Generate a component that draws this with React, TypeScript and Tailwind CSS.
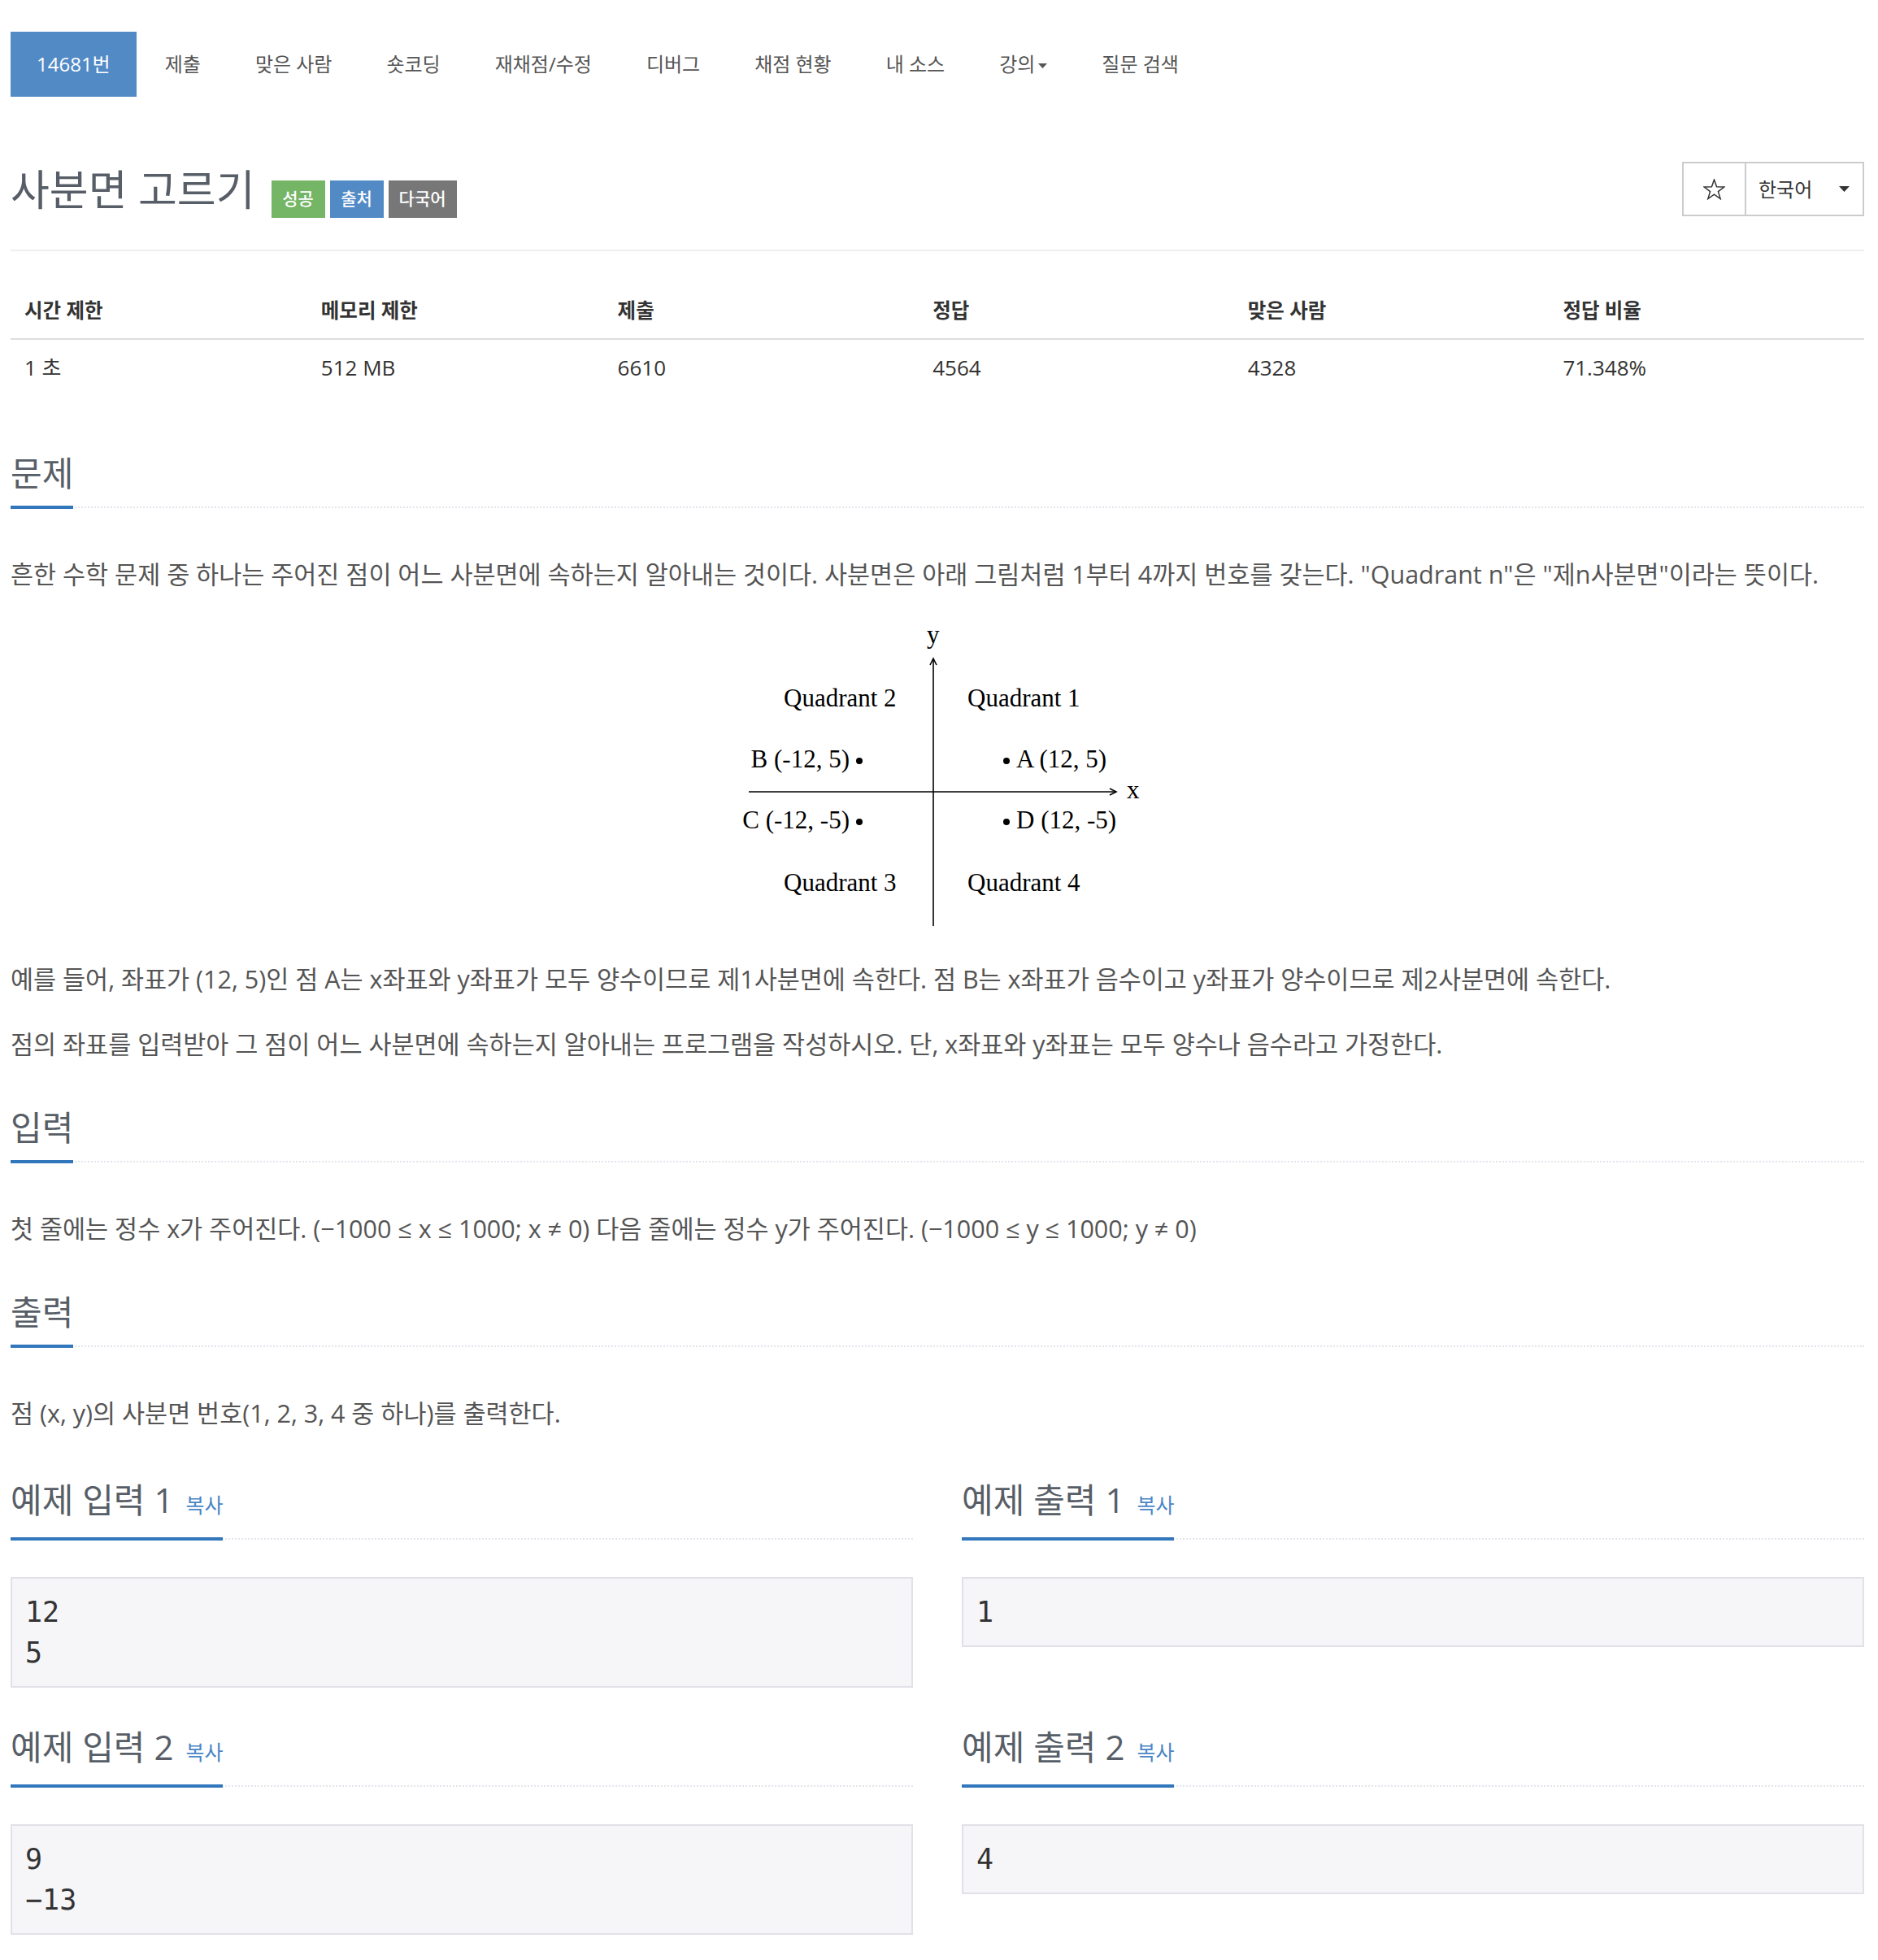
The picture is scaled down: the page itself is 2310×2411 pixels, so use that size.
import type { ReactNode } from "react";

const navItems = [
  "14681번",
  "제출",
  "맞은 사람",
  "숏코딩",
  "재채점/수정",
  "디버그",
  "채점 현황",
  "내 소스",
  "강의",
  "질문 검색",
];

const stats = [
  { label: "시간 제한", value: "1 초", width: "w-[16%]" },
  { label: "메모리 제한", value: "512 MB", width: "w-[16%]" },
  { label: "제출", value: "6610", width: "w-[17%]" },
  { label: "정답", value: "4564", width: "w-[17%]" },
  { label: "맞은 사람", value: "4328", width: "w-[17%]" },
  { label: "정답 비율", value: "71.348%", width: "w-[17%]" },
];

function Headline({ children }: { children: ReactNode }) {
  return (
    <div className="border-b-2 border-dotted border-[#e2e6ec]">
      <h2 className="-mb-[3px] inline-block border-b-4 border-[#3277bc] pt-[4px] pb-[18px] text-[42px] leading-[44px] font-normal text-[#575e67]">
        {children}
      </h2>
    </div>
  );
}

function Sample({ title, lines }: { title: string; lines: string[] }) {
  return (
    <div>
      <Headline>
        {title}
        <span className="ml-[15px] text-[25px] text-[#4a86c5]">복사</span>
      </Headline>
      <pre className="mt-[46px] border-2 border-[#e1e1e7] bg-[#f6f6f8] px-[16px] py-[16px] font-['DejaVu_Sans_Mono',monospace] text-[35px] leading-[50px] text-[#333]">
        {lines.join("\n")}
      </pre>
    </div>
  );
}

function Diagram() {
  return (
    <div className="flex justify-center pt-[15px]">
      <svg width="506" height="405" viewBox="0 -20 506 405" className="font-['Liberation_Serif',serif]">
        <g stroke="#000" strokeWidth="1.6" fill="none">
          <line x1="248" y1="44" x2="248" y2="373" />
          <polyline points="244,52 248,44 252,52" />
          <line x1="21" y1="208" x2="473" y2="208" />
          <polyline points="465,204 473,208 465,212" />
        </g>
        <g fill="#000" fontSize="31">
          <text x="240" y="25">y</text>
          <text x="486" y="216">x</text>
          <text x="64" y="103">Quadrant 2</text>
          <text x="290" y="103">Quadrant 1</text>
          <text x="145" y="178" textAnchor="end">B (-12, 5)</text>
          <circle cx="157" cy="170" r="4" />
          <circle cx="338" cy="170" r="4" />
          <text x="350" y="178">A (12, 5)</text>
          <text x="145" y="253" textAnchor="end">C (-12, -5)</text>
          <circle cx="157" cy="245" r="4" />
          <circle cx="338" cy="245" r="4" />
          <text x="350" y="253">D (12, -5)</text>
          <text x="64" y="330">Quadrant 3</text>
          <text x="290" y="330">Quadrant 4</text>
        </g>
      </svg>
    </div>
  );
}

export default function App() {
  return (
    <div className="min-h-[2411px] bg-white pl-[13px] pr-[17px] pb-[28px] font-['Open_Sans','Noto_Sans_CJK_KR',sans-serif] text-[#555]">
      {/* problem menu */}
      <ul className="flex gap-[3px] pt-[39px]">
        {navItems.map((item, i) => (
          <li
            key={item}
            className={
              i === 0
                ? "flex h-[80px] items-center bg-[#528ac6] px-[32px] text-[24px] text-white"
                : "flex h-[80px] items-center px-[32px] text-[24px] text-[#555]"
            }
          >
            {item}
            {item === "강의" && (
              <svg width="11" height="6" viewBox="0 0 11 6" className="ml-[4px] mt-[3px]">
                <polygon points="0,0 11,0 5.5,6" fill="#555" />
              </svg>
            )}
          </li>
        ))}
      </ul>

      {/* title */}
      <div className="mt-[80px] flex h-[110px] items-start justify-between border-b-2 border-[#eee]">
        <div className="mt-[5px] flex items-start">
          <h1 className="text-[52px] leading-[57px] font-normal text-[#575e67]">사분면 고르기</h1>
          <div className="ml-[20px] mt-[18px] flex gap-[6px] text-[21px] font-medium text-white">
            <span className="flex h-[46px] w-[66px] items-center justify-center bg-[#74b566]">성공</span>
            <span className="flex h-[46px] w-[66px] items-center justify-center bg-[#528ac6]">출처</span>
            <span className="flex h-[46px] w-[84px] items-center justify-center bg-[#777]">다국어</span>
          </div>
        </div>
        <div className="flex h-[67px] border-2 border-[#ccc] text-[#333]">
          <div className="flex w-[77px] items-center justify-center border-r-2 border-[#ccc]">
            <svg width="27" height="26" viewBox="0 0 27 26">
              <polygon
                points="13.5,1 16.56,9.79 25.86,9.98 18.45,15.61 21.14,24.52 13.5,19.2 5.86,24.52 8.55,15.61 1.14,9.98 10.44,9.79"
                fill="none"
                stroke="#333"
                strokeWidth="1.5"
                strokeLinejoin="miter"
              />
            </svg>
          </div>
          <div className="flex w-[143px] items-center justify-between pl-[15px] pr-[16px] text-[24px]">
            한국어
            <svg width="13" height="7" viewBox="0 0 13 7">
              <polygon points="0,0 13,0 6.5,7" fill="#333" />
            </svg>
          </div>
        </div>
      </div>

      {/* limits table */}
      <table className="mt-[38px] w-full table-fixed text-left leading-[33px] text-[#333]">
        <thead>
          <tr className="border-b-2 border-[#ddd]">
            {stats.map((s) => (
              <th key={s.label} className={`${s.width} px-[17px] py-[18px] text-[24.5px] font-bold`}>
                {s.label}
              </th>
            ))}
          </tr>
        </thead>
        <tbody>
          <tr>
            {stats.map((s) => (
              <td key={s.label} className="px-[17px] py-[18px] text-[26px]">
                {s.value}
              </td>
            ))}
          </tr>
        </tbody>
      </table>

      <div className="text-[30.5px] leading-[50px]">
        {/* 문제 */}
        <section className="mt-[69px]">
          <Headline>문제</Headline>
          <p className="mt-[56px]">
            흔한 수학 문제 중 하나는 주어진 점이 어느 사분면에 속하는지 알아내는 것이다. 사분면은 아래 그림처럼 1부터 4까지 번호를 갖는다. "Quadrant n"은 "제n사분면"이라는 뜻이다.
          </p>
          <Diagram />
          <p className="mt-[28px]">
            예를 들어, 좌표가 (12, 5)인 점 A는 x좌표와 y좌표가 모두 양수이므로 제1사분면에 속한다. 점 B는 x좌표가 음수이고 y좌표가 양수이므로 제2사분면에 속한다.
          </p>
          <p className="mt-[30px]">
            점의 좌표를 입력받아 그 점이 어느 사분면에 속하는지 알아내는 프로그램을 작성하시오. 단, x좌표와 y좌표는 모두 양수나 음수라고 가정한다.
          </p>
        </section>

        {/* 입력 */}
        <section className="mt-[52px]">
          <Headline>입력</Headline>
          <p className="mt-[56px]">
            첫 줄에는 정수 x가 주어진다. (−1000 ≤ x ≤ 1000; x ≠ 0) 다음 줄에는 정수 y가 주어진다. (−1000 ≤ y ≤ 1000; y ≠ 0)
          </p>
        </section>

        {/* 출력 */}
        <section className="mt-[52px]">
          <Headline>출력</Headline>
          <p className="mt-[56px]">점 (x, y)의 사분면 번호(1, 2, 3, 4 중 하나)를 출력한다.</p>
        </section>
      </div>

      {/* samples */}
      <div className="mt-[56px] grid grid-cols-2 gap-x-[60px] gap-y-[47px]">
        <Sample title="예제 입력 1" lines={["12", "5"]} />
        <Sample title="예제 출력 1" lines={["1"]} />
        <Sample title="예제 입력 2" lines={["9", "−13"]} />
        <Sample title="예제 출력 2" lines={["4"]} />
      </div>
    </div>
  );
}
